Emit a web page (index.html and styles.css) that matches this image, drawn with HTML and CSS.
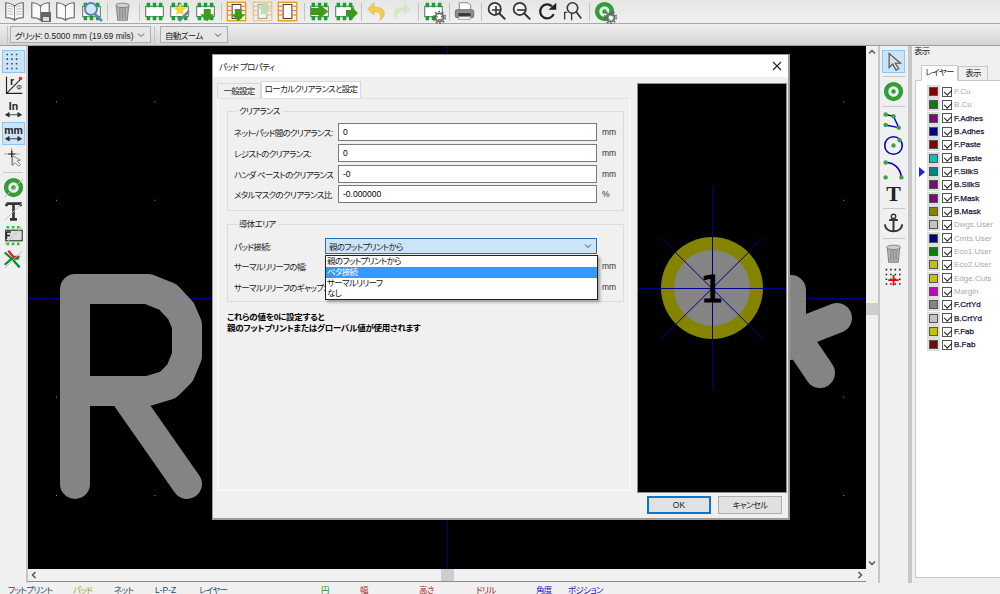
FILE: index.html
```html
<!DOCTYPE html>
<html lang="ja">
<head>
    <meta charset="UTF-8">
    <title>パッド プロパティ</title>
    <link rel="stylesheet" href="styles.css">
</head>
<body>
    <!-- shared icon parts -->
    <svg class="defs">
        <symbol id="book" viewBox="0 0 24 24"><path d="M12 6C9 3 5 2 2 2v17c3 0 7 0 10 3 3-3 7-3 10-3V2c-3 0-7 1-10 4z" fill="#fafafa" stroke="#6e6e6e" stroke-width="1.4"/><path d="M12 6v16" stroke="#6e6e6e"/></symbol>
        <symbol id="pages" viewBox="0 0 24 24"><path d="M4 6c2-.6 4-.4 6 1M4 9c2-.6 4-.4 6 1M4 12c2-.6 4-.4 6 1M4 15c2-.6 4-.4 6 1M14 7c2-1.400 4-1.600 6-1M14 10c2-1.400 4-1.600 6-1M14 13c2-1.400 4-1.600 6-1M14 16c2-1.400 4-1.600 6-1" stroke="#aaa" fill="none"/></symbol>
        <symbol id="chip" viewBox="0 0 24 24"><rect x="2" y="6" width="20" height="12" fill="#fff" stroke="#555"/><path d="M3 2h4v5H3zM10 2h4v5h-4zM17 2h4v5h-4zM3 17h4v5H3zM10 17h4v5h-4zM17 17h4v5h-4z" fill="#0fa52c"/></symbol>
        <symbol id="down" viewBox="0 0 24 24"><path d="M10 9h8v6h4l-8 8-8-8h4z" fill="#3f9a1b"/></symbol>
        <symbol id="up" viewBox="0 0 24 24"><path d="M10 15h8V9h4l-8-8-8 8h4z" fill="#8fcf7a"/></symbol>
        <symbol id="right" viewBox="0 0 24 24"><path d="M2 8h9V3l11 9-11 9v-5H2z" fill="#3f9a1b"/></symbol>
        <symbol id="board" viewBox="0 0 24 24"><rect x="1.500" y="1.500" width="21" height="21" fill="#fbf3de" stroke="#e3a21a" stroke-width="1.600"/><path d="M2 6h4M2 11h4M2 16h4M18 6h4M18 11h4M18 16h4" stroke="#d35b2b"/><rect x="7" y="4" width="10" height="16" fill="#fff" stroke="#444" stroke-width="1.200"/></symbol>
        <symbol id="gear" viewBox="0 0 24 24"><circle cx="12" cy="12" r="6.500" fill="none" stroke="#666" stroke-width="3"/><circle cx="12" cy="12" r="9.500" fill="none" stroke="#666" stroke-width="2.500" stroke-dasharray="3 2.970"/><circle cx="12" cy="12" r="3" fill="#fff"/></symbol>
        <symbol id="glass" viewBox="0 0 24 24"><circle cx="10" cy="9" r="7" fill="#f4f4f4" stroke="#333" stroke-width="2"/><path d="M15 14l7 7" stroke="#333" stroke-width="2.400"/></symbol>
        <symbol id="trash" viewBox="0 0 24 24"><path d="M5 6h14l-1.500 16h-11z" fill="#b5b5b5" stroke="#777"/><path d="M9 8v12M12 8v12M15 8v12" stroke="#8a8a8a" stroke-width="1.500"/><ellipse cx="12" cy="5" rx="8" ry="2.500" fill="#d0d0d0" stroke="#777"/></symbol>
        <symbol id="chev" viewBox="0 0 8 8"><path d="M5.500 1L2.500 4l3 3" fill="none" stroke="#555" stroke-width="1.500"/></symbol>
        <symbol id="via" viewBox="0 0 24 24"><circle cx="12" cy="12" r="8.500" fill="none" stroke="#2f9e34" stroke-width="5"/><circle cx="12" cy="12" r="2.500" fill="#2f9e34"/></symbol>
        <symbol id="node" viewBox="0 0 6 6"><circle cx="3" cy="3" r="2.500" fill="#3ea243"/></symbol>
    </svg>

    <div class="toolbar top-tools">
        <span class="tool"><svg><use href="#book"/><use href="#pages"/></svg></span>
        <span class="tool"><svg><use href="#book"/><rect x="11" y="11" width="10" height="10" fill="#666"/><rect x="13" y="16" width="6" height="4" fill="#ddd"/></svg></span>
        <span class="tool"><svg><use href="#book"/></svg></span>
        <span class="tool"><svg><use href="#chip"/><circle cx="10" cy="8" r="6" fill="#cfe6f5" stroke="#5a86b0" stroke-width="2"/><path d="M14 13l7 7" stroke="#5a86b0" stroke-width="2.500"/></svg></span>
        <i class="sep"></i>
        <span class="tool"><svg><use href="#trash"/></svg></span>
        <i class="sep"></i>
        <span class="tool"><svg><use href="#chip"/></svg></span>
        <span class="tool"><svg><use href="#chip"/><path d="M11 2l2 4 4 1-3 3 1 4-4-2-4 2 1-4-3-3 4-1z" fill="#f4d52c"/><path d="M10 20l10-10" stroke="#6a87a8" stroke-width="2.500"/></svg></span>
        <span class="tool"><svg><use href="#chip"/><use href="#down"/></svg></span>
        <i class="sep"></i>
        <span class="tool"><svg><use href="#board"/><use href="#down"/></svg></span>
        <span class="tool faded"><svg><use href="#board"/><use href="#up"/></svg></span>
        <span class="tool"><svg><use href="#board"/></svg></span>
        <i class="sep"></i>
        <span class="tool"><svg><use href="#chip"/><use href="#right"/></svg></span>
        <span class="tool"><svg><use href="#chip"/><path d="M12 9h5V5l7 7-7 7v-4h-5z" fill="#3f9a1b"/></svg></span>
        <i class="sep"></i>
        <span class="tool"><svg viewBox="0 0 24 24"><path d="M9 2L2 9l7 7v-4c5 0 8 2 8 7 0 1-1 2-1 3 4-3 6-7 4-11-2-3-6-4-11-4z" fill="#f1cf4b" stroke="#d8b437" stroke-width=".8"/></svg></span>
        <span class="tool faded"><svg viewBox="0 0 24 24"><path d="M15 2l7 7-7 7v-4c-5 0-8 2-8 7 0 1 1 2 1 3-4-3-6-7-4-11 2-3 6-4 11-4z" fill="#b7e3a5"/></svg></span>
        <i class="sep"></i>
        <span class="tool"><svg><use href="#chip"/><g transform="translate(9 9) scale(.62)"><use href="#gear" width="24" height="24"/></g></svg></span>
        <i class="sep"></i>
        <span class="tool"><svg viewBox="0 0 24 24"><path d="M6 2h10l3 3v6H6z" fill="#fff" stroke="#777"/><rect x="1.500" y="10" width="21" height="9" rx="2" fill="#8e8e8e" stroke="#666"/><rect x="5" y="14" width="14" height="3" fill="#333"/><rect x="5" y="18" width="14" height="3" fill="#eee" stroke="#777" stroke-width=".6"/></svg></span>
        <i class="sep"></i>
        <span class="tool"><svg><use href="#glass"/><path d="M6 9h8M10 5v8" stroke="#333" stroke-width="1.600"/></svg></span>
        <span class="tool"><svg><use href="#glass"/><path d="M6 9h8" stroke="#333" stroke-width="1.600"/></svg></span>
        <span class="tool"><svg viewBox="0 0 24 24"><path d="M17 6a8 8 0 1 0 2 9" fill="none" stroke="#222" stroke-width="2.600"/><path d="M13 10h9V2z" fill="#222"/></svg></span>
        <span class="tool"><svg viewBox="0 0 24 24"><circle cx="12" cy="8" r="6" fill="none" stroke="#333" stroke-width="1.800"/><path d="M16 12l6 8" stroke="#333" stroke-width="2"/><path d="M3 21v-8h3M11 14v8" stroke="#333" stroke-width="1.500" fill="none"/></svg></span>
        <i class="sep"></i>
        <span class="tool"><svg><use href="#via"/><g transform="translate(9 9) scale(.62)"><use href="#gear" width="24" height="24"/></g></svg></span>
    </div>

    <div class="toolbar sub-tools">
        <i class="sep"></i>
        <div class="combo grid-combo"><span><span class="jp">グリッド:</span> 0.5000 mm (19.69 mils)</span><svg class="arrow" viewBox="0 0 8 8"><path d="M1 2.500l3 3 3-3" fill="none" stroke="#555"/></svg></div>
        <i class="sep"></i>
        <div class="combo zoom-combo"><span class="jp">自動ズーム</span><svg class="arrow" viewBox="0 0 8 8"><path d="M1 2.500l3 3 3-3" fill="none" stroke="#555"/></svg></div>
    </div>

    <div class="main">
        <div class="side-tools">
            <span class="side-tool on"><svg viewBox="0 0 24 24"><path d="M4 4h16M4 9.300h16M4 14.600h16M4 20h16" stroke="#345" stroke-width="1.800" stroke-dasharray="1.800 3.500" fill="none"/></svg></span>
            <span class="side-tool"><svg viewBox="0 0 24 24"><path d="M4 2v19h18M4 21L20 5" stroke="#222" stroke-width="1.300" fill="none"/><circle cx="20" cy="4" r="2" fill="#e22"/><text x="8" y="11" class="ico-text">r</text><text x="15" y="17" class="ico-small">Φ</text></svg></span>
            <span class="side-tool"><svg viewBox="0 0 24 24"><text x="12" y="13" class="ico-text mid">In</text><path d="M3 18h18M3 18l4-2.500v5zM21 18l-4-2.500v5z" fill="#333" stroke="#333"/></svg></span>
            <span class="side-tool on"><svg viewBox="0 0 24 24"><text x="12" y="12" class="ico-text mid">mm</text><path d="M3 18h18M3 18l4-2.500v5zM21 18l-4-2.500v5z" fill="#333" stroke="#333"/></svg></span>
            <span class="side-tool"><svg viewBox="0 0 24 24"><path d="M1 8h18M10 1v20" stroke="#999"/><path d="M6 8h8M10 4v8" stroke="#222" stroke-width="1.400"/><path d="M11 10v11l3-3 4 4 2-2-4-4 4-1z" fill="#eee" stroke="#777"/></svg></span>
            <i class="tool-sep"></i>
            <span class="side-tool"><svg><use href="#via"/><path d="M2 20L20 2" stroke="#bbb"/></svg></span>
            <span class="side-tool"><svg viewBox="0 0 24 24"><path d="M4 3h16v3M4 3v3M12 3v18M8 21h8" stroke="#333" stroke-width="3" fill="none"/><path d="M2 22L22 2" stroke="#bbb"/></svg></span>
            <span class="side-tool"><svg viewBox="0 0 24 24"><path d="M4 1h3v3H4zM10 1h3v3h-3zM16 1h3v3h-3zM4 20h3v3H4zM10 20h3v3h-3zM16 20h3v3h-3z" fill="#1fd020"/><rect x="3" y="6" width="19" height="12" fill="#ddd" stroke="#444" stroke-width="1.400"/><path d="M4 8h5M4 8v8M4 12h4" stroke="#222" stroke-width="1.500"/><path d="M2 22L22 2" stroke="#bbb"/></svg></span>
            <span class="side-tool"><svg viewBox="0 0 24 24"><path d="M2 18l8-7h8M2 4l9 8 8 9" fill="none" stroke="#0a8a3a" stroke-width="2.600"/><path d="M6 2l6 7h7" fill="none" stroke="#d22" stroke-width="2.600"/><path d="M2 22L22 2" stroke="#bbb"/></svg></span>
        </div>

        <div class="editor">
            <div class="canvas-row">
                <svg class="canvas" viewBox="28 46 838 523">
                    <defs>
                        <pattern id="dots" x="56" y="3" width="98.400" height="98.400" patternUnits="userSpaceOnUse"><rect width="1" height="1" fill="#999"/></pattern>
                    </defs>
                    <rect x="28" y="46" width="838" height="523" fill="#000"/>
                    <rect x="28" y="46" width="838" height="523" fill="url(#dots)"/>
                    <path d="M28 298.500h838M447.500 46v523" stroke="#000084"/>
                    <g fill="none" stroke="#848484" stroke-width="30" stroke-linecap="round" stroke-linejoin="round">
                        <path d="M75 484V289h73l20 8 13 14 6 14v31l-7 17-12 12-20 6H75M122 391l65 93"/>
                        <path d="M791 290v55M791 336l46-18M791 330l29 43"/>
                    </g>
                </svg>
                <div class="vscroll">
                    <svg class="chev up-chev"><use href="#chev"/></svg>
                    <i class="vthumb"></i>
                    <svg class="chev down-chev"><use href="#chev"/></svg>
                </div>
            </div>
            <div class="hscroll">
                <svg class="chev"><use href="#chev"/></svg>
                <i class="hthumb"></i>
                <svg class="chev flip"><use href="#chev"/></svg>
            </div>
        </div>

        <div class="side-tools right-tools">
            <span class="side-tool on"><svg viewBox="0 0 24 24"><path d="M7 3v16l4-4 4 7 3-2-4-6h6z" fill="#ddd" stroke="#555" stroke-width="1.400"/></svg></span>
            <i class="tool-sep"></i>
            <span class="side-tool"><svg><use href="#via"/></svg></span>
            <i class="tool-sep"></i>
            <span class="side-tool"><svg viewBox="0 0 24 24"><path d="M3 4l9 2 6 13-15-3" fill="none" stroke="#0000c8" stroke-width="1.600"/><use href="#node" x="0" y="1" width="6" height="6"/><use href="#node" x="9" y="3" width="6" height="6"/><use href="#node" x="15" y="16" width="6" height="6"/><use href="#node" x="0" y="13" width="6" height="6"/></svg></span>
            <span class="side-tool"><svg viewBox="0 0 24 24"><circle cx="12" cy="12" r="10" fill="none" stroke="#0000c8" stroke-width="1.800"/><use href="#node" x="9" y="9" width="6" height="6"/><use href="#node" x="16" y="3" width="6" height="6"/></svg></span>
            <span class="side-tool"><svg viewBox="0 0 24 24"><path d="M3 4c10 0 17 7 18 17" fill="none" stroke="#0000c8" stroke-width="1.800"/><use href="#node" x="0" y="1" width="6" height="6"/><use href="#node" x="18" y="18" width="6" height="6"/><use href="#node" x="0" y="18" width="6" height="6"/></svg></span>
            <span class="side-tool"><svg viewBox="0 0 24 24"><text x="12" y="20" class="ico-t">T</text></svg></span>
            <i class="tool-sep"></i>
            <span class="side-tool"><svg viewBox="0 0 24 24"><circle cx="12" cy="4" r="2.500" fill="none" stroke="#333" stroke-width="1.600"/><path d="M7 8h10M12 6v15M2 13c1 6 5 8 10 8s9-2 10-8" fill="none" stroke="#333" stroke-width="2.200"/></svg></span>
            <i class="tool-sep"></i>
            <span class="side-tool"><svg><use href="#trash"/></svg></span>
            <span class="side-tool"><svg viewBox="0 0 24 24"><path d="M3 3h18M3 8.500h18M3 14h18M3 19.500h18" stroke="#222" stroke-width="1.800" stroke-dasharray="1.800 3.300"/><path d="M6 15h12M12 9v12" stroke="#e00" stroke-width="2"/></svg></span>
        </div>

        <div class="layer-panel">
            <div class="panel-title">表示</div>
            <div class="panel-tabs">
                <span class="panel-tab active">レイヤー</span>
                <span class="panel-tab">表示</span>
            </div>
            <div class="layer-box">
                <div class="layer dim"><i class="mark"></i><span class="swatch c-red"><b></b></span><span class="check"></span>F.Cu</div>
                <div class="layer dim"><i class="mark"></i><span class="swatch c-green"><b></b></span><span class="check"></span>B.Cu</div>
                <div class="layer"><i class="mark"></i><span class="swatch c-purple"><b></b></span><span class="check"></span>F.Adhes</div>
                <div class="layer"><i class="mark"></i><span class="swatch c-navy"><b></b></span><span class="check"></span>B.Adhes</div>
                <div class="layer"><i class="mark"></i><span class="swatch c-red"><b></b></span><span class="check"></span>F.Paste</div>
                <div class="layer"><i class="mark"></i><span class="swatch c-cyan"><b></b></span><span class="check"></span>B.Paste</div>
                <div class="layer"><i class="mark current"></i><span class="swatch c-teal"><b></b></span><span class="check"></span>F.SilkS</div>
                <div class="layer"><i class="mark"></i><span class="swatch c-purple"><b></b></span><span class="check"></span>B.SilkS</div>
                <div class="layer"><i class="mark"></i><span class="swatch c-purple"><b></b></span><span class="check"></span>F.Mask</div>
                <div class="layer"><i class="mark"></i><span class="swatch c-olive"><b></b></span><span class="check"></span>B.Mask</div>
                <div class="layer dim"><i class="mark"></i><span class="swatch c-silver"><b></b></span><span class="check"></span>Dwgs.User</div>
                <div class="layer dim"><i class="mark"></i><span class="swatch c-navy"><b></b></span><span class="check"></span>Cmts.User</div>
                <div class="layer dim"><i class="mark"></i><span class="swatch c-green"><b></b></span><span class="check"></span>Eco1.User</div>
                <div class="layer dim"><i class="mark"></i><span class="swatch c-yellow"><b></b></span><span class="check"></span>Eco2.User</div>
                <div class="layer dim"><i class="mark"></i><span class="swatch c-yellow"><b></b></span><span class="check"></span>Edge.Cuts</div>
                <div class="layer dim"><i class="mark"></i><span class="swatch c-magenta"><b></b></span><span class="check"></span>Margin</div>
                <div class="layer"><i class="mark"></i><span class="swatch c-gray"><b></b></span><span class="check"></span>F.CrtYd</div>
                <div class="layer"><i class="mark"></i><span class="swatch c-silver"><b></b></span><span class="check"></span>B.CrtYd</div>
                <div class="layer"><i class="mark"></i><span class="swatch c-yellow"><b></b></span><span class="check"></span>F.Fab</div>
                <div class="layer"><i class="mark"></i><span class="swatch c-red"><b></b></span><span class="check"></span>B.Fab</div>
            </div>
        </div>
    </div>

    <div class="status">
        <span class="s-teal">フットプリント</span>
        <span class="s-olive">パッド</span>
        <span class="s-teal">ネット</span>
        <span class="s-teal latin">L-P-Z</span>
        <span class="s-teal">レイヤー</span>
        <span class="s-green">円</span>
        <span class="s-red">幅</span>
        <span class="s-red">高さ</span>
        <span class="s-red">ドリル</span>
        <span class="s-blue">角度</span>
        <span class="s-blue">ポジション</span>
    </div>

    <!-- pad properties dialog -->
    <div class="dialog">
        <div class="dialog-title">
            <span class="jp">パッド プロパティ</span>
            <svg class="close" viewBox="0 0 10 10"><path d="M1 1l8 8M9 1L1 9" stroke="#222" stroke-width="1.100"/></svg>
        </div>
        <div class="dialog-body">
            <div class="notebook">
                <div class="tabs">
                    <span class="tab">一般設定</span>
                    <span class="tab active">ローカルクリアランスと設定</span>
                </div>
                <div class="page">
                    <fieldset class="group">
                        <legend>クリアランス</legend>
                        <div class="row"><label>ネット-パッド間のクリアランス:</label><div class="field">0</div><span class="unit">mm</span></div>
                        <div class="row"><label>レジストのクリアランス:</label><div class="field">0</div><span class="unit">mm</span></div>
                        <div class="row"><label>ハンダ ペーストのクリアランス</label><div class="field">-0</div><span class="unit">mm</span></div>
                        <div class="row"><label>メタルマスクのクリアランス比</label><div class="field">-0.000000</div><span class="unit">%</span></div>
                    </fieldset>
                    <fieldset class="group copper">
                        <legend>導体エリア</legend>
                        <div class="row short"><label>パッド接続:</label>
                            <div class="select"><span>親のフットプリントから</span><svg class="arrow" viewBox="0 0 8 8"><path d="M1 2.500l3 3 3-3" fill="none" stroke="#445"/></svg></div>
                        </div>
                        <div class="row short"><label>サーマルリリーフの幅:</label><div class="select-gap"></div><span class="unit">mm</span></div>
                        <div class="row short"><label>サーマルリリーフのギャップ:</label><div class="select-gap"></div><span class="unit">mm</span></div>
                        <ul class="dropdown">
                            <li>親のフットプリントから</li>
                            <li class="hover">ベタ接続</li>
                            <li>サーマルリリーフ</li>
                            <li>なし</li>
                        </ul>
                    </fieldset>
                    <p class="note">これらの値を0に設定すると<br>親のフットプリントまたはグローバル値が使用されます</p>
                </div>
            </div>
            <svg class="preview" viewBox="638 84 148 408">
                <rect x="638" y="84" width="148" height="408" fill="#000"/>
                <circle cx="712" cy="288" r="51" fill="#848400"/>
                <circle cx="712" cy="288" r="38" fill="#848484"/>
                <path d="M638 288.500h148M712.500 186v204M661 238l102 101M763 238L661 339" stroke="#000084"/>
                <text x="712" y="302" class="pad-num">1</text>
            </svg>
        </div>
        <div class="dialog-buttons">
            <span class="button default">OK</span>
            <span class="button jp">キャンセル</span>
        </div>
    </div>
</body>
</html>
```

FILE: styles.css
```css
* {
    box-sizing: border-box;
}

html, body {
    margin: 0;
    height: 594px;
    overflow: hidden;
}

body {
    position: relative;
    font-family: "Liberation Sans", "Noto Sans CJK JP", sans-serif;
    font-feature-settings: "palt";
    font-size: 8.5px;
    color: #222;
    background-color: #f0f0f0;
}

/* the original UI font has narrow kana */
.jp,
legend,
label,
.tab,
.panel-tab,
.panel-title,
.select span,
.dropdown li,
.status span {
    letter-spacing: -0.7px;
    white-space: nowrap;
}

.status .latin {
    letter-spacing: 0;
}

.defs {
    display: none;
}

svg {
    display: block;
}

i {
    display: block;
}

.toolbar {
    display: flex;
    align-items: center;
}

.top-tools {
    height: 24px;
    padding-left: 2px;
    background: linear-gradient(#e6e6e6, #f0f0f0);
    border-bottom: 1px solid #a9a9a9;
}

.tool {
    width: 25.5px;
    height: 23px;
    display: flex;
    align-items: center;
    justify-content: center;
}

.tool svg {
    width: 21px;
    height: 21px;
}

.tool > svg:not([viewBox]) {
    overflow: visible;
}

.faded {
    opacity: 0.45;
}

.sep {
    width: 1px;
    height: 18px;
    margin: 0 2px 0 3px;
    background-color: #c4c4c4;
}

.sub-tools {
    height: 22px;
    padding-left: 4px;
    background: linear-gradient(#efefef, #d4d4d4);
    border-bottom: 1px solid #9c9c9c;
}

.combo {
    height: 17px;
    display: flex;
    align-items: center;
    justify-content: space-between;
    padding: 0 5px 0 4px;
    white-space: nowrap;
    background-color: #e6e6e6;
    border: 1px solid #adadad;
}

.grid-combo {
    width: 141px;
}

.zoom-combo {
    width: 68px;
    margin-left: 3px;
}

.arrow {
    width: 8px;
    height: 8px;
}

.main {
    display: flex;
    height: 537px;
}

.side-tools {
    width: 28px;
    flex: none;
    padding-top: 3px;
    background-color: #f0f0f0;
    border-right: 2px solid #c6c6c6;
}

.side-tool {
    display: block;
    width: 23px;
    height: 23px;
    margin: 1px 1px 1px 2px;
    border: 1px solid transparent;
}

.side-tool svg {
    width: 21px;
    height: 21px;
}

.side-tool.on {
    background-color: #cce4f7;
    border-color: #8fc4ee;
}

.tool-sep {
    height: 1px;
    margin: 3px 3px;
    background-color: #c8c8c8;
}

.ico-text {
    font-size: 12px;
    font-weight: bold;
    fill: #222;
}

.ico-small {
    font-size: 8px;
    fill: #222;
}

.mid {
    text-anchor: middle;
}

.ico-t {
    font-family: "Liberation Serif", serif;
    font-size: 25px;
    font-weight: bold;
    text-anchor: middle;
    fill: #222;
}

.editor {
    flex: none;
    width: 852px;
    border-right: 2px solid #c6c6c6;
}

.canvas-row {
    display: flex;
    height: 523px;
}

.canvas {
    width: 838px;
    height: 523px;
}

.vscroll {
    width: 12px;
    position: relative;
    background-color: #f0f0f0;
}

.vthumb {
    position: absolute;
    top: 257px;
    left: 0;
    width: 12px;
    height: 12px;
    background-color: #cdcdcd;
}

.chev {
    width: 8px;
    height: 8px;
}

.up-chev {
    position: absolute;
    top: 2px;
    left: 2px;
    transform: rotate(90deg);
}

.down-chev {
    position: absolute;
    bottom: 2px;
    left: 2px;
    transform: rotate(-90deg);
}

.flip {
    transform: scaleX(-1);
}

.hscroll {
    display: flex;
    align-items: center;
    justify-content: space-between;
    width: 838px;
    height: 13px;
    padding: 0 2px;
    position: relative;
    background-color: #f0f0f0;
    border-bottom: 1px solid #8a8a8a;
}

.hthumb {
    position: absolute;
    left: 413px;
    top: 0;
    width: 13px;
    height: 12px;
    background-color: #cdcdcd;
}

.right-tools {
    width: 30px;
    padding-left: 0;
}

.layer-panel {
    flex: 1;
    padding-left: 3px;
    background-color: #f0f0f0;
    border-left: 2px solid #c6c6c6;
}

.panel-title {
    height: 19px;
    line-height: 10px;
    margin-left: -1px;
}

.panel-tabs {
    display: flex;
    align-items: flex-end;
    height: 15px;
    padding-left: 6px;
    position: relative;
    z-index: 1;
}

.panel-tab {
    width: 30px;
    height: 14px;
    line-height: 13px;
    text-align: center;
    background-color: #f0f0f0;
    border: 1px solid #c8c8c8;
    border-bottom: 0;
}

.panel-tab.active {
    width: 37px;
    height: 16px;
    background-color: #fff;
    border-bottom: 1px solid #fff;
    margin-bottom: -1px;
}

.layer-box {
    height: 498px;
    padding: 4px 0 0 3px;
    background-color: #fff;
    border: 1px solid #c8c8c8;
    border-right: 0;
}

.layer {
    display: flex;
    align-items: center;
    height: 13.33px;
    font-size: 8px;
    color: #16163a;
    -webkit-text-stroke: 0.25px #16163a;
    white-space: nowrap;
}

.layer.dim {
    color: #a8a8a8;
    -webkit-text-stroke: 0;
}

.mark {
    width: 8px;
    height: 8px;
    flex: none;
}

.mark.current {
    width: 0;
    height: 0;
    margin-right: 2px;
    border-left: 6px solid #2222ee;
    border-top: 5px solid transparent;
    border-bottom: 5px solid transparent;
}

.swatch {
    flex: none;
    display: flex;
    align-items: center;
    justify-content: center;
    width: 13px;
    height: 13px;
    background-color: #dedede;
}

.swatch b {
    display: block;
    width: 9px;
    height: 9px;
    border: 1px solid #555;
}

.c-red b { background-color: #840000; }
.c-green b { background-color: #008400; }
.c-purple b { background-color: #840084; }
.c-navy b { background-color: #000084; }
.c-cyan b { background-color: #00c2c2; }
.c-teal b { background-color: #008484; }
.c-olive b { background-color: #848400; }
.c-silver b { background-color: #c2c2c2; }
.c-yellow b { background-color: #c2c200; }
.c-magenta b { background-color: #c200c2; }
.c-gray b { background-color: #848484; }

.check {
    flex: none;
    position: relative;
    width: 10px;
    height: 10px;
    margin: 0 2px 0 2px;
    background-color: #fff;
    border: 1px solid #555;
}

.check::after {
    content: "";
    position: absolute;
    left: 1px;
    top: 0;
    width: 6px;
    height: 3.500px;
    border-left: 1px solid #222;
    border-bottom: 1px solid #222;
    transform: rotate(-45deg) translate(-0.500px, 1px);
}

.status {
    display: grid;
    grid-template-columns: 65px 41px 41px 44px 122px 39px 59px 57px 60px 32px 1fr;
    height: 11px;
    padding: 2px 0 0 8px;
    line-height: 11px;
}

.s-teal { color: #17506b; }
.s-olive { color: #a3a338; }
.s-green { color: #2b8a3e; }
.s-red { color: #a02c2c; }
.s-blue { color: #1414b0; }

.dialog {
    position: absolute;
    left: 212px;
    top: 54px;
    width: 578px;
    height: 466px;
    display: flex;
    flex-direction: column;
    background-color: #f0f0f0;
    border: solid #9a9a9a;
    border-width: 1px 2px 2px 1px;
}

.dialog-title {
    display: flex;
    align-items: center;
    justify-content: space-between;
    height: 22px;
    flex: none;
    padding: 0 6px;
    background-color: #fff;
}

.close {
    width: 10px;
    height: 10px;
}

.dialog-body {
    display: flex;
    justify-content: space-between;
    height: 415px;
    flex: none;
    padding: 0 2px 0 4px;
}

.notebook {
    width: 414px;
    padding-top: 4px;
}

.tabs {
    display: flex;
    align-items: flex-end;
    height: 17px;
}

.tab {
    width: 44px;
    height: 15px;
    line-height: 14px;
    text-align: center;
    background-color: #f0f0f0;
    border: 1px solid #d9d9d9;
    border-bottom: 0;
}

.tab.active {
    width: 100px;
    height: 17px;
    line-height: 15px;
    background-color: #fff;
}

.page {
    height: 393px;
    padding: 7px 5px 0 8px;
    border: 2px solid #f8f8f8;
    border-top: 1px solid #e0e0e0;
}

.group {
    position: relative;
    margin: 0;
    height: 105px;
    padding: 6px 0 0 6px;
    border: 1px solid #dcdcdc;
}

.group legend {
    padding: 0 2px;
    margin-left: 3px;
    line-height: 10px;
}

.copper {
    height: 83px;
    margin-top: 8px;
    padding-top: 6.500px;
}

.row {
    display: flex;
    align-items: center;
    height: 20.670px;
}

.row label {
    width: 104px;
    flex: none;
}

.field {
    width: 259px;
    height: 18px;
    flex: none;
    line-height: 16px;
    padding-left: 4px;
    color: #000;
    background-color: #fff;
    border: 1px solid #7a7a7a;
}

.unit {
    margin-left: 5px;
    color: #333;
}

.row.short {
    height: 20.500px;
}

.short label {
    width: 91px;
}

.select {
    width: 272px;
    height: 16px;
    flex: none;
    display: flex;
    align-items: center;
    justify-content: space-between;
    padding: 0 4px 0 3px;
    background-color: #cce4f7;
    border: 1px solid #2a6fb0;
}

.select-gap {
    width: 272px;
    flex: none;
}

.dropdown {
    position: absolute;
    left: 97px;
    top: 26px;
    width: 273px;
    height: 45px;
    margin: 0;
    padding: 0;
    list-style: none;
    background-color: #fff;
    border: 1px solid #222;
    box-shadow: 2px 2px 3px rgba(0, 0, 0, 0.35);
}

.dropdown li {
    height: 10.800px;
    line-height: 10.800px;
    padding-left: 1px;
    color: #111;
}

.dropdown li.hover {
    color: #fff;
    background-color: #3399ff;
}

.note {
    margin: 9.500px 0 0 0;
    line-height: 11px;
    font-weight: bold;
    letter-spacing: -0.25px;
    color: #000;
}

.preview {
    width: 148px;
    height: 408px;
    margin-top: 7px;
    outline: 1px solid #8c8c8c;
}

.pad-num {
    font-family: "DejaVu Sans", sans-serif;
    font-size: 38px;
    text-anchor: middle;
    fill: #000;
    stroke: #000;
    stroke-width: 1px;
}

.dialog-buttons {
    display: flex;
    justify-content: flex-end;
    gap: 7px;
    padding: 4px 6px 0 0;
}

.button {
    width: 64px;
    height: 18px;
    line-height: 16px;
    text-align: center;
    background-color: #e1e1e1;
    border: 1px solid #adadad;
}

.button.default {
    border: 2px solid #0078d7;
    line-height: 14px;
}
```
